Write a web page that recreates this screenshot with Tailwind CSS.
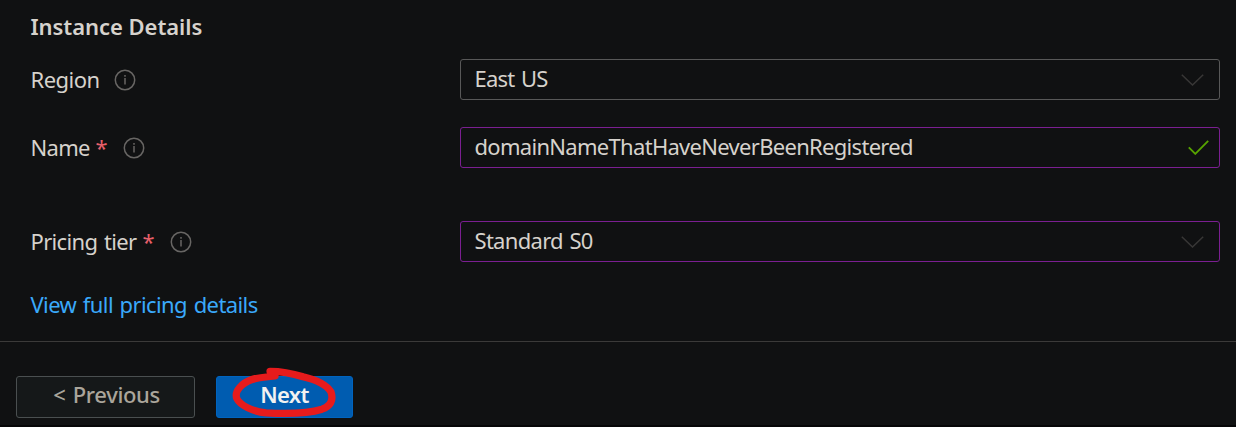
<!DOCTYPE html>
<html lang="en">
<head>
<meta charset="utf-8">
<title>Instance Details</title>
<script src="https://cdn.jsdelivr.net/npm/@tailwindcss/browser@4"></script>
</head>
<body class="h-[427px] w-[1236px] overflow-hidden bg-[#101112] font-['Noto_Sans','Open_Sans',sans-serif] text-[22px] leading-[30px] text-[#d6d2cc]">
<main class="flex h-[341px] flex-col pl-[30.5px] pr-4 pt-[11px]">
  <h2 class="h-12 font-semibold tracking-[-0.05px]"><span>Instance Details</span></h2>
  <div class="flex h-[41px] items-center">
    <div class="flex w-[429.5px] items-center">
      <span class="w-[69px] pb-0.5 tracking-[-0.5px]">Region</span>
      <svg class="ml-3.5 size-[22px]" viewBox="0 0 22 22" fill="none" stroke="#686664" stroke-width="1.5"><circle cx="11" cy="11" r="9.7"/><path d="M11 9v6.500M11 6v1.700"/></svg>
    </div>
    <div class="flex h-[41px] flex-1 items-center justify-between rounded-[3px] border border-[#585858] pl-[13.5px] pr-[15px]">
      <span class="pb-1 tracking-[-0.75px] [word-spacing:1.5px]">East US</span>
      <svg class="h-3 w-[23px]" viewBox="0 0 23 12" fill="none" stroke="#383736" stroke-width="1.5"><path d="M.8.8 11.5 11 22.2.8"/></svg>
    </div>
  </div>
  <div class="mt-[27px] flex h-[41px] items-center">
    <div class="flex w-[429.5px] items-center">
      <span class="w-[60px] pb-0.5 tracking-[-0.7px]">Name</span>
      <span class="w-[15px] pb-0.5 pl-[5px] text-[#e8606a]">*</span>
      <svg class="ml-[17.5px] size-[22px]" viewBox="0 0 22 22" fill="none" stroke="#686664" stroke-width="1.5"><circle cx="11" cy="11" r="9.7"/><path d="M11 9v6.500M11 6v1.700"/></svg>
    </div>
    <div class="flex h-[41px] flex-1 items-center justify-between rounded-[3px] border border-[#7b1f91] pl-[13.5px] pr-2.5">
      <span class="pb-1 tracking-[-0.7px]">domainNameThatHaveNeverBeenRegistered</span>
      <svg class="h-[15px] w-[21px]" viewBox="0 0 21 15" fill="none" stroke="#57a300" stroke-width="1.9"><path d="M.8 7.3 7.300 13.800 20.200.8"/></svg>
    </div>
  </div>
  <div class="mt-[53px] flex h-[41px] items-center">
    <div class="flex w-[429.5px] items-center">
      <span class="w-[107px] pb-0.5 tracking-[-0.65px] [word-spacing:1.5px]">Pricing tier</span>
      <span class="w-[15px] pb-0.5 pl-[5px] text-[#e8606a]">*</span>
      <svg class="ml-[17px] size-[22px]" viewBox="0 0 22 22" fill="none" stroke="#686664" stroke-width="1.5"><circle cx="11" cy="11" r="9.7"/><path d="M11 9v6.500M11 6v1.700"/></svg>
    </div>
    <div class="flex h-[41px] flex-1 items-center justify-between rounded-[3px] border border-[#7b1f91] pl-[13.5px] pr-[15px]">
      <span class="pb-1 tracking-[-0.7px] [word-spacing:1.5px]">Standard S0</span>
      <svg class="h-3 w-[23px]" viewBox="0 0 23 12" fill="none" stroke="#383736" stroke-width="1.5"><path d="M.8.8 11.5 11 22.2.8"/></svg>
    </div>
  </div>
  <a class="mt-[27px] tracking-[-0.6px] text-[#3aa9fb] [word-spacing:1.5px]">View full pricing details</a>
</main>
<footer class="flex h-[86px] gap-[21px] border-t border-[#3b3a39] pl-4 pt-[34px] shadow-[inset_0_-2px_0_#060607]">
  <button class="h-[42px] w-[179px] rounded-[3px] border border-[#4a4f50] bg-[#151819] pb-1.5 pr-0.5 font-medium tracking-[-0.35px] text-[#aaa59b] [word-spacing:2px]"><span class="pl-1">&lt; Previous</span></button>
  <button class="relative h-[42px] w-[137px] rounded-[3px] border border-[#0064bf] bg-[#005cb0] pb-1.5 font-semibold tracking-[-0.65px] text-[#f1f1f1]"><span>Next</span>
    <svg class="absolute -left-px -top-[11px] h-[54px] w-[137px]" viewBox="216 366 137 54" fill="none" stroke="#e71b1c" stroke-width="7.200" stroke-linecap="round" stroke-linejoin="round"><path d="M270 371.300C282 371.300 291 373 303 376.800C317 380 326 384 331 392C334 401 330 406.500 322 409.200C308 413.500 286 414 266 412.800C252 411.500 240 405 236.800 398.500C234 391 242 383 252 379.500C260 377 268 377 275 376"/></svg>
  </button>
</footer>
</body>
</html>
